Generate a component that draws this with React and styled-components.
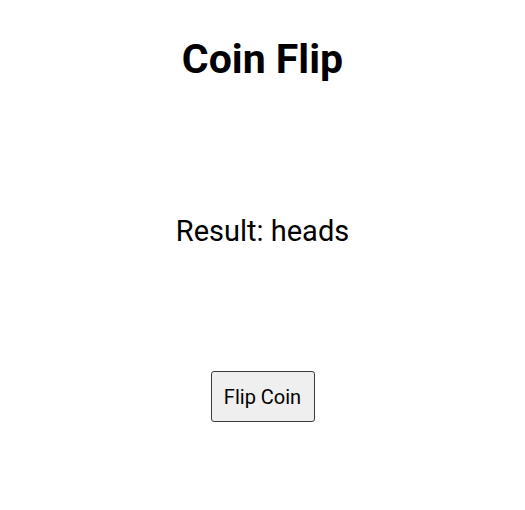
import React, { useState } from 'react';
import styled, { createGlobalStyle } from 'styled-components';

const GlobalStyle = createGlobalStyle`
  body {
    margin: 0;
    background: #fff;
    font-family: Roboto, "Liberation Sans", sans-serif;
  }
`;

const Page = styled.div`
  display: flex;
  flex-direction: column;
  align-items: center;
  padding-top: 35px;
`;

const Title = styled.h1`
  margin: 0;
  font-size: 41px;
  font-weight: 700;
  color: #000;
  line-height: 48px;
`;

const Result = styled.p`
  margin: 131px 0 0;
  font-size: 29px;
  line-height: 34px;
  color: #000;
`;

const FlipButton = styled.button`
  margin-top: 123px;
  width: 104px;
  height: 51px;
  font-family: inherit;
  font-size: 20px;
  color: #000;
  background: #efefef;
  border: 1px solid #3a3a3a;
  border-radius: 3px;
  cursor: pointer;
`;

export default function App() {
  const [side, setSide] = useState('heads');

  return (
    <>
      <GlobalStyle />
      <Page>
        <Title>Coin Flip</Title>
        <Result>Result: {side}</Result>
        <FlipButton onClick={() => setSide(Math.random() < 0.5 ? 'heads' : 'tails')}>
          Flip Coin
        </FlipButton>
      </Page>
    </>
  );
}
